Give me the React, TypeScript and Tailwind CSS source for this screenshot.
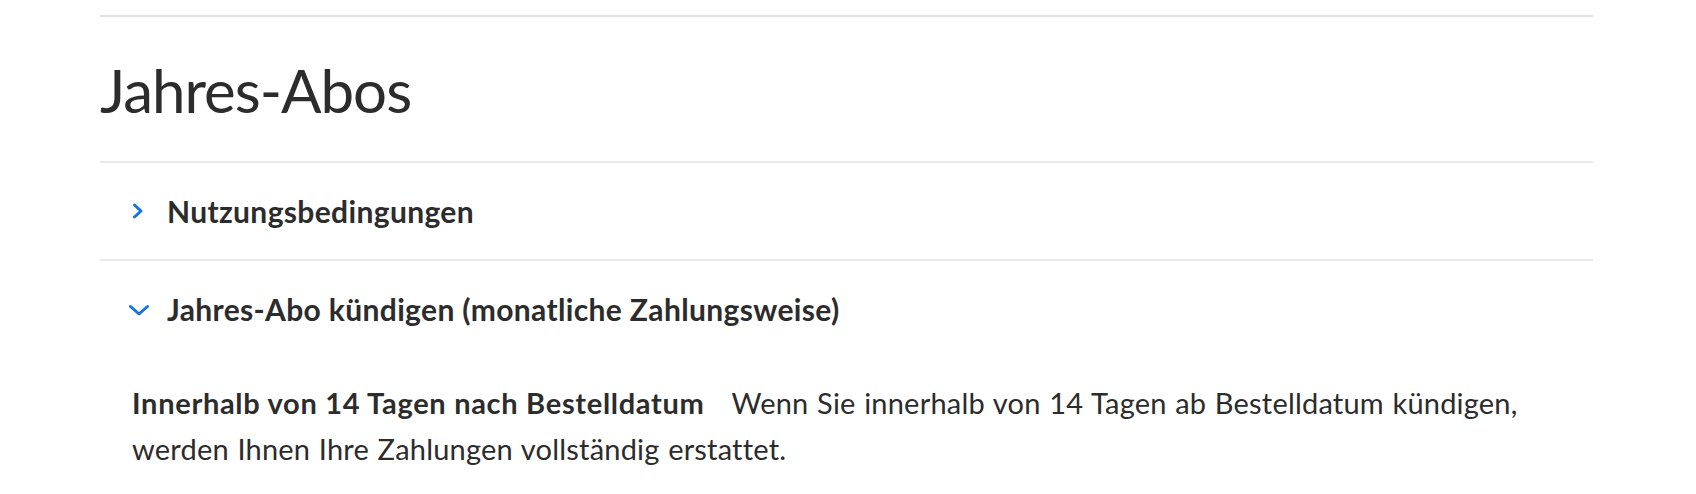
import React from 'react';

function ChevronRight() {
  return (
    <svg width="12" height="16" viewBox="0 0 12 16" className="shrink-0">
      <path d="M2.5 2 L9 8 L2.5 14" fill="none" stroke="#1473e6" strokeWidth="3" strokeLinecap="round" strokeLinejoin="round" />
    </svg>
  );
}

function ChevronDown() {
  return (
    <svg width="22" height="12" viewBox="0 0 22 12" className="shrink-0">
      <path d="M2.5 2.5 L11 10 L19.5 2.5" fill="none" stroke="#1473e6" strokeWidth="3" strokeLinecap="round" strokeLinejoin="round" />
    </svg>
  );
}

export default function App() {
  return (
    <div className="min-h-screen bg-white font-['Lato',sans-serif] text-[#2c2c2c]">
      <div className="ml-[100px] w-[1493px] pt-[15px]">
        <div className="border-t-2 border-[#e1e1e1]" />

        <h1 className="mt-[43px] mb-[41px] text-[60px] leading-[60px] font-normal tracking-[-1px]">Jahres-Abos</h1>

        {/* Collapsed item */}
        <div className="border-t-2 border-[#eaeaea]">
          <div className="flex h-[96px] items-center pl-[32px]">
            <ChevronRight />
            <span className="ml-[23px] text-[30px] font-bold tracking-[0.35px]">Nutzungsbedingungen</span>
          </div>
        </div>

        {/* Expanded item */}
        <div className="border-t-2 border-[#eaeaea]">
          <div className="flex h-[97px] items-center pl-[28px]">
            <ChevronDown />
            <span className="ml-[17px] text-[30px] font-bold tracking-[0.35px]">Jahres-Abo kündigen (monatliche Zahlungsweise)</span>
          </div>
          <p className="mt-[22px] pl-[32px] pr-[40px] text-[29px] leading-[46px] tracking-[0.2px] [word-spacing:1px]">
            <strong className="mr-[27px] font-bold tracking-[0.7px] [word-spacing:0px]">Innerhalb von 14 Tagen nach Bestelldatum</strong>
            Wenn Sie innerhalb von 14 Tagen ab Bestelldatum kündigen, werden Ihnen Ihre Zahlungen vollständig erstattet.
          </p>
        </div>
      </div>
    </div>
  );
}
